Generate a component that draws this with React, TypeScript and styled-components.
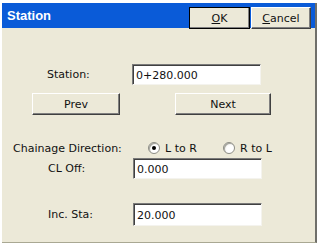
import styled, { createGlobalStyle } from 'styled-components';

const GlobalStyle = createGlobalStyle`
html, body {
margin: 0;
padding: 0;
background: #ffffff;
}
body {
font-family: "DejaVu Sans", Verdana, sans-serif;
font-size: 11px;
color: #111;
}
`;

const Window = styled.div`
display: flex;
flex-flow: column nowrap;
box-sizing: border-box;
width: 315px;
height: 240px;
margin: 3px 0 0 2px;
background: #ECE9D8;
border-right: 2px solid #6f6f6a;
border-bottom: 1px solid #a9a893;
`;

const TitleBar = styled.div`
display: flex;
align-items: center;
justify-content: space-between;
height: 25px;
padding: 0 4px 0 5px;
background: #0a5bd8;
`;

const Title = styled.span`
font-family: "Liberation Sans", Arial, sans-serif;
font-weight: bold;
font-size: 13px;
color: #ffffff;
`;

const TitleButtons = styled.div`
display: flex;
gap: 1px;
align-self: flex-start;
margin-top: 4px;
`;

const TitleButton = styled.button<{ $default?: boolean }>`
box-sizing: border-box;
width: ${p => p.$default ? 61 : 60}px;
height: 22px;
padding: 0;
font-family: "DejaVu Sans", Verdana, sans-serif;
font-size: 11px;
color: #111;
background: #ECE9D8;
border: 1px solid;
border-color: #ffffff #404040 #404040 #ffffff;
outline: ${p => p.$default ? '1px solid #000' : 'none'};
outline-offset: -1px;
box-shadow: inset -1px -1px 0 #808080;
u { text-decoration: underline; }
`;

const Body = styled.div`
display: flex;
flex-flow: column nowrap;
`;

const FieldRow = styled.div<{ $top: number; $left: number; $labelWidth: number }>`
display: flex;
align-items: center;
margin-top: ${p => p.$top}px;
padding-left: ${p => p.$left}px;

& > label {
width: ${p => p.$labelWidth}px;
}
`;

const TextBox = styled.div<{ $height: number }>`
box-sizing: border-box;
width: 129px;
height: ${p => p.$height}px;
padding: 2px 0 0 3px;
display: flex;
align-items: center;
background: #ffffff;
border: 1px solid;
border-color: #7a7a7a #f4f3ee #f4f3ee #7a7a7a;
box-shadow: inset 1px 1px 0 #404040;
`;

const ButtonRow = styled.div`
display: flex;
margin-top: 8px;
padding-left: 30px;
gap: 55px;
`;

const PushButton = styled.button<{ $width: number }>`
box-sizing: border-box;
width: ${p => p.$width}px;
height: 22px;
padding: 0;
font-family: "DejaVu Sans", Verdana, sans-serif;
font-size: 11px;
color: #111;
background: #ECE9D8;
border: 1px solid;
border-color: #ffffff #404040 #404040 #ffffff;
box-shadow: inset -1px -1px 0 #808080;
`;

const DirectionRow = styled.div`
display: flex;
align-items: center;
height: 14px;
margin-top: 26px;
padding-left: 11px;
`;

const DirectionLabel = styled.span`
width: 135px;
`;

const RadioOption = styled.label`
display: flex;
align-items: center;
gap: 5px;
width: 75px;
`;

const RadioCircle = styled.span<{ $checked?: boolean }>`
position: relative;
box-sizing: border-box;
width: 12px;
height: 12px;
border-radius: 50%;
background: radial-gradient(circle at 65% 65%, #ffffff 40%, #dcdcd4 100%);
border: 1px solid #8d8d86;
box-shadow: inset 1px 1px 0 #a7a79f;

&::after {
content: '';
display: ${p => p.$checked ? 'block' : 'none'};
position: absolute;
left: 3px;
top: 3px;
width: 4px;
height: 4px;
border-radius: 50%;
background: #000;
}
`;

export default function App() {
	return (
		<>
			<GlobalStyle/>
			<Window>
				<TitleBar>
					<Title>Station</Title>
					<TitleButtons>
						<TitleButton $default><u>O</u>K</TitleButton>
						<TitleButton><u>C</u>ancel</TitleButton>
					</TitleButtons>
				</TitleBar>
				<Body>
					<FieldRow $top={36} $left={45} $labelWidth={85}>
						<label>Station:</label>
						<TextBox $height={21}>0+280.000</TextBox>
					</FieldRow>
					<ButtonRow>
						<PushButton $width={88}>Prev</PushButton>
						<PushButton $width={96}>Next</PushButton>
					</ButtonRow>
					<DirectionRow>
						<DirectionLabel>Chainage Direction:</DirectionLabel>
						<RadioOption><RadioCircle $checked/>L to R</RadioOption>
						<RadioOption><RadioCircle/>R to L</RadioOption>
					</DirectionRow>
					<FieldRow $top={3} $left={46} $labelWidth={85}>
						<label>CL Off:</label>
						<TextBox $height={21}>0.000</TextBox>
					</FieldRow>
					<FieldRow $top={24} $left={46} $labelWidth={85}>
						<label>Inc. Sta:</label>
						<TextBox $height={23}>20.000</TextBox>
					</FieldRow>
				</Body>
			</Window>
		</>
	);
}
